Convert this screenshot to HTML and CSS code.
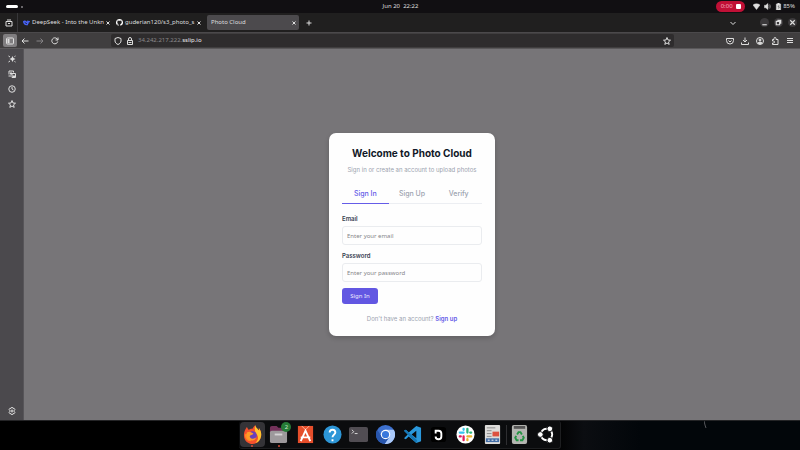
FILE: index.html
```html
<!DOCTYPE html>
<html lang="en">
<head>
<meta charset="utf-8">
<title>Photo Cloud</title>
<link rel="stylesheet" href="styles.css">
</head>
<body>
<header class="system">
  <div class="workspaces"><span class="pill"></span><span class="dot"></span></div>
  <time class="clock">Jun 20&nbsp; 22:22</time>
  <div class="status">
    <button class="record">0:00 <span class="stop"></span></button>
    <svg class="icon" viewBox="0 0 16 16"><path fill="currentColor" d="M0 4.500C4.500 1 11.500 1 16 4.500L8 15z"/></svg>
    <svg class="icon" viewBox="0 0 16 16"><path fill="currentColor" d="M1 5h3l5-4v14l-5-4H1z"/><path d="M11 5q2 3 0 6M13 3q4 5 0 10"/></svg>
    <span class="battery"><svg class="icon" viewBox="0 0 16 16"><path fill="currentColor" d="M6 0h4v2h3v14H3V2h3z"/><path stroke="#222" d="M9 5l-2 4h3l-2 4"/></svg>85%</span>
  </div>
</header>

<nav class="tabstrip" aria-label="Browser tabs">
  <button class="tool view" aria-label="Recent browsing"><svg class="icon" viewBox="0 0 16 16"><path d="M2 5h12v9H2zM4 2h8M6 8l2 2 2-2"/></svg></button>
  <div class="tab">
    <svg class="icon favicon" viewBox="0 0 16 16"><path fill="#4863f5" stroke="none" d="M0 5c4-3 7 0 9 1 1-1 1-2 1-3 2 1 3 2 6 1 0 3-1 4-3 4 0 3-1 4-2 5l1 1H8c-5 0-8-4-8-9z"/><path stroke="#171a35" d="M4 8c2 0 3 3 5 3"/></svg>
    <span class="tab-title">DeepSeek - Into the Unkn</span><button class="close" aria-label="Close tab"><svg viewBox="0 0 8 8"><path d="M1 1l6 6M7 1L1 7"/></svg></button>
  </div>
  <div class="tab">
    <svg class="icon favicon" viewBox="0 0 16 16"><path fill="#fff" stroke="none" d="M8 0a8 8 0 0 0-2.500 15.600c.4.100.5-.2.500-.4v-1.500c-2.200.5-2.700-1-2.700-1-.4-.9-.9-1.200-.9-1.200-.7-.5.100-.5.100-.5.800.1 1.200.8 1.200.8.700 1.200 1.900.9 2.300.7.100-.5.300-.9.500-1.100-1.800-.2-3.600-.9-3.600-4 0-.9.300-1.600.8-2.100-.1-.2-.4-1 .1-2.100 0 0 .7-.2 2.200.8a7.500 7.500 0 0 1 4 0c1.500-1 2.200-.8 2.200-.8.400 1.100.2 1.900.1 2.100.5.600.8 1.300.8 2.100 0 3.100-1.900 3.800-3.700 4 .3.300.6.800.6 1.500v2.300c0 .2.100.5.500.4A8 8 0 0 0 8 0z"/></svg>
    <span class="tab-title">guderian120/s3_photo_s</span><button class="close" aria-label="Close tab"><svg viewBox="0 0 8 8"><path d="M1 1l6 6M7 1L1 7"/></svg></button>
  </div>
  <div class="tab active">
    <span class="tab-title">Photo Cloud</span><button class="close" aria-label="Close tab"><svg viewBox="0 0 8 8"><path d="M1 1l6 6M7 1L1 7"/></svg></button>
  </div>
  <button class="tool new" aria-label="New tab"><svg class="icon" viewBox="0 0 16 16"><path d="M8 3v10M3 8h10"/></svg></button>
  <div class="window">
    <button class="tool list" aria-label="List tabs"><svg class="icon" viewBox="0 0 16 16"><path d="M3 6l5 5 5-5"/></svg></button>
    <button class="round" aria-label="Minimize"><svg viewBox="0 0 8 8"><path d="M2 6h4"/></svg></button>
    <button class="round" aria-label="Restore"><svg viewBox="0 0 8 8"><path d="M2 3h3v3H2zM3 2h3v3"/></svg></button>
    <button class="round" aria-label="Close"><svg viewBox="0 0 8 8"><path d="M2 2l4 4M6 2L2 6"/></svg></button>
  </div>
</nav>

<div class="toolbar">
  <div class="navigation">
    <button class="tool pressed" aria-label="Sidebar"><svg class="icon" viewBox="0 0 16 16"><rect x="1" y="2" width="14" height="12" rx="2"/><path fill="currentColor" stroke="none" d="M3 4h4v8H3z"/></svg></button>
    <button class="tool" aria-label="Back"><svg class="icon" viewBox="0 0 16 16"><path d="M15 8H2M7 3L2 8l5 5"/></svg></button>
    <button class="tool" aria-label="Forward" disabled><svg class="icon" viewBox="0 0 16 16"><path d="M1 8h13M9 3l5 5-5 5"/></svg></button>
    <button class="tool" aria-label="Reload"><svg class="icon" viewBox="0 0 16 16"><path d="M13.500 9A6 6 0 1 1 12 3.500L14 6M14 1v5H9"/></svg></button>
  </div>
  <div class="address">
    <svg class="icon" viewBox="0 0 16 16"><path d="M8 1l6 2v5c0 3-3 6-6 7-3-1-6-4-6-7V3z"/></svg>
    <svg class="icon" viewBox="0 0 16 16"><path d="M3 7h10v8H3zM5 7V4a3 3 0 0 1 6 0v3M5 11h6"/></svg>
    <span class="url">34.242.217.222.<b>sslip.io</b></span>
    <button class="tool" aria-label="Bookmark"><svg class="icon" viewBox="0 0 16 16"><path d="M8 1l2 5 5 .4-4 3.400 1.400 5L8 12l-4.400 2.800 1.400-5-4-3.400L6 6z"/></svg></button>
  </div>
  <div class="actions">
    <button class="tool" aria-label="Pocket"><svg class="icon" viewBox="0 0 16 16"><path d="M1 3h14v4a7 7 0 0 1-14 0zM5 7l3 3 3-3"/></svg></button>
    <button class="tool" aria-label="Downloads"><svg class="icon" viewBox="0 0 16 16"><path d="M8 1v9M4 6l4 4 4-4M1 11v4h14v-4"/></svg></button>
    <button class="tool" aria-label="Account"><svg class="icon" viewBox="0 0 16 16"><circle cx="8" cy="8" r="7"/><circle cx="8" cy="6" r="2" fill="currentColor"/><path fill="currentColor" d="M4 12q4-4 8 0-4 3-8 0z"/></svg></button>
    <button class="tool" aria-label="Extensions"><svg class="icon" viewBox="0 0 16 16"><path d="M3 5h3V3a2 2 0 0 1 4 0v2h4v10H3v-3h2a2 2 0 0 0 0-4H3z"/></svg></button>
    <button class="tool" aria-label="Menu"><svg class="icon" viewBox="0 0 16 16"><path d="M2 3h12M2 7h12M2 11h12"/></svg></button>
  </div>
</div>

<div class="workspace">
  <aside class="sidebar">
    <button class="tool" aria-label="Assistant"><svg class="icon" viewBox="0 0 16 16"><path fill="currentColor" stroke="none" d="M9 2l2 4 4 2-4 2-2 4-2-4-4-2 4-2z"/><path d="M1 2l3 2M1 14l3-2M13 3l2-1M13 13l2 1"/></svg></button>
    <button class="tool" aria-label="Synced tabs"><svg class="icon" viewBox="0 0 16 16"><path d="M2 9V2h9v3M1 12h5M8 7h7v8H8z"/><path fill="currentColor" stroke="none" d="M4 5h4v4H4zM9 11h5v4H9z"/></svg></button>
    <button class="tool" aria-label="History"><svg class="icon" viewBox="0 0 16 16"><circle cx="8" cy="8" r="6.500"/><path d="M8 4v4l3 2"/></svg></button>
    <button class="tool" aria-label="Bookmarks"><svg class="icon" viewBox="0 0 16 16"><path d="M8 1l2 5 5 .4-4 3.400 1.400 5L8 12l-4.400 2.800 1.400-5-4-3.400L6 6z"/></svg></button>
    <button class="tool settings" aria-label="Settings"><svg class="icon" viewBox="0 0 16 16"><path d="M6.500 1h3l.7 2 2-.4 1.600 2.600L12.500 7v2l1.300 1.800-1.600 2.600-2-.4-.7 2h-3l-.7-2-2 .4-1.600-2.600L3.500 9V7L2.200 5.200l1.600-2.600 2 .4z"/><circle cx="8" cy="8" r="2"/></svg></button>
  </aside>
  <main class="page">
    <section class="card">
      <h1>Welcome to Photo Cloud</h1>
      <p class="lead">Sign in or create an account to upload photos</p>
      <div class="auth-tabs" role="tablist">
        <button role="tab" aria-selected="true">Sign In</button>
        <button role="tab" aria-selected="false">Sign Up</button>
        <button role="tab" aria-selected="false">Verify</button>
      </div>
      <form>
        <div class="field"><label for="email">Email</label><input id="email" type="email" placeholder="Enter your email"></div>
        <div class="field"><label for="password">Password</label><input id="password" type="password" placeholder="Enter your password"></div>
        <button class="submit" type="button">Sign In</button>
      </form>
      <p class="switch">Don't have an account? <a href="#signup">Sign up</a></p>
    </section>
  </main>
</div>

<footer class="desktop">
  <svg class="streak" viewBox="0 0 4 8"><path d="M0 0l1 4 1 3"/></svg>
  <nav class="dock" aria-label="Dock">
    <button class="app current running" aria-label="Firefox"><svg viewBox="0 0 20 20"><path fill="#f5502d" d="M1 11C1 6 3 4 4 2c1 1 1 2 2 3 2-1 3-1 4-1 1-2 2-3 3-4 0 3 3 4 4 6 0-1 0-2-.5-3C19 6 19.500 9 19 12c-1 5-5 8-9 8s-9-3-9-9z"/><path fill="#ffc52e" d="M13 0c0 3 3 4 4 6 0-1 0-2-.5-3C19 6 19.500 9 19 12c-1 4-3 6-6 7 3-3 4-6 1-10-2-3-2-6-1-9z"/><path fill="#ff8a24" d="M2 10c2-2 4-1 5 0l3 2-2 5c-4 0-6-3-6-7z"/><circle cx="10" cy="11" r="4.500" fill="#6940ba"/><path fill="#ff9b27" d="M4 8c3-2 5 0 7 1-1 2-3 1-4 3 1 3 5 3 7 1-1 4-8 5-10 0z"/></svg></button>
    <button class="app running" aria-label="Files"><svg viewBox="0 0 20 20"><path fill="#74325b" d="M1 3q0-2 2-2h5l2 2h7q2 0 2 2v6H1z"/><rect x="1" y="6" width="18" height="13" rx="2" fill="#9d999c"/><path fill="#d5d2d4" d="M6 9h8v2H6z"/></svg><span class="badge">2</span></button>
    <button class="app" aria-label="App Center"><svg viewBox="0 0 20 20"><path fill="#e64e2b" d="M2 1h16v18H2z"/><path stroke="#ffb69e" d="M6 1l4 4 4-4"/><path stroke="#fff" stroke-width="2" d="M5 17l5-11 5 11M5 13h10"/></svg></button>
    <button class="app" aria-label="Help"><svg viewBox="0 0 20 20"><circle cx="10" cy="10" r="9.500" fill="#2d96d7"/><path stroke="#fff" stroke-width="2" d="M7 8c0-4 6-4 6 0 0 2-3 2-3 5M10 15v2"/></svg></button>
    <button class="app" aria-label="Terminal"><svg viewBox="0 0 20 20"><rect x="0" y="2" width="20" height="16" rx="2" fill="#514d53"/><path stroke="#ddd" d="M3 5l2 2-2 2M6 9h3"/></svg></button>
    <button class="app" aria-label="Chromium"><svg viewBox="0 0 20 20"><circle cx="10" cy="10" r="10" fill="#3d70ce"/><path fill="#aac9fa" d="M10 5h8.700A10 10 0 0 1 9 20l5-8z"/><path fill="#2856ad" d="M1.300 5A10 10 0 0 0 9 20l5-7-8-1z"/><circle cx="10" cy="10" r="5" fill="#fff"/><circle cx="10" cy="10" r="3.800" fill="#3978dc"/></svg></button>
    <button class="app" aria-label="Visual Studio Code"><svg viewBox="0 0 20 20"><path fill="#2a98dc" fill-rule="evenodd" d="M14 1l5 2v14l-5 2-8-7-3 3-2-1 4-4-4-4 2-1 3 3zM14 6l-5 4 5 4z"/><path fill="#1677b5" d="M1 6l2-1 12 11-1 3z"/></svg></button>
    <button class="app" aria-label="Notes"><svg viewBox="0 0 20 20"><rect x="2" y="2" width="16" height="16" rx="3" fill="#000"/><path stroke="#fff" stroke-width="2" d="M7 9V6h3c2 0 3 1 3 3v3c0 2-1 3-3 3s-3-1-3-3"/></svg></button>
    <button class="app" aria-label="Slack"><svg viewBox="0 0 20 20"><circle cx="10" cy="10" r="9.500" fill="#fff"/><g stroke-width="2.400" stroke-linecap="round"><path stroke="#36c5f0" d="M4 8h4M8 4v1"/><path stroke="#2eb67d" d="M12 4v4M15 8h1"/><path stroke="#ecb22e" d="M12 12h4M12 15v1"/><path stroke="#e01e5a" d="M8 12v4M4 12h1"/></g></svg></button>
    <button class="app" aria-label="Documents"><svg viewBox="0 0 20 20"><rect x="2" y="0" width="16" height="20" rx="1" fill="#dddcda"/><path stroke="#8a8a8a" d="M4 3h9M4 6h5M4 9h5M4 12h5"/><path fill="#dd5140" d="M10 7h7v5h-7z"/><path fill="#426da6" d="M3 14h14v4H3z"/><path stroke="#fff" d="M5 16h2M9 16h2M13 16h2"/></svg></button>
    <span class="separator"></span>
    <button class="app" aria-label="Trash"><svg viewBox="0 0 20 20"><rect x="2" y="0" width="16" height="20" rx="2" fill="#b4b5b1"/><path fill="#555" d="M4 1h12v3H4z"/><path stroke="#239443" stroke-width="2" d="M7.500 10l1.500-2.500h2l1.500 2.500M13.500 11.500l1 2-1.500 2.500h-2.500M9 16H7l-1.500-2.500 1-2"/></svg></button>
    <button class="app" aria-label="Show applications"><svg viewBox="0 0 20 20"><circle cx="10" cy="10" r="6" stroke="#fff" stroke-width="2"/><g fill="#fff" stroke="#0c0d0f"><circle cx="3.500" cy="10" r="3"/><circle cx="13.500" cy="4" r="3"/><circle cx="13.500" cy="16" r="3"/></g></svg></button>
  </nav>
</footer>
</body>
</html>
```

FILE: styles.css
```css
* { box-sizing: border-box; }
body {
  margin: 0;
  min-height: 100vh;
  display: flex;
  flex-direction: column;
  font: 6px/9px "Noto Sans", sans-serif;
  color: #dedede;
  background: #000;
}
button {
  margin: 0;
  padding: 0;
  border: 0;
  background: none;
  color: inherit;
  font: inherit;
}
svg { display: block; fill: none; }
.icon {
  flex: none;
  width: 8px;
  height: 8px;
  stroke: currentColor;
  stroke-width: 2;
}

/* System bar */
.system {
  display: grid;
  grid-template-columns: 1fr auto 1fr;
  align-items: center;
  height: 13px;
  padding: 0 5px 0 6px;
  background: #110f12;
}
.workspaces { display: flex; align-items: center; gap: 3px; }
.pill { width: 12px; height: 3px; border-radius: 2px; background: #fff; }
.dot { width: 2px; height: 2px; border-radius: 50%; background: #88868a; }
.status { display: flex; justify-content: flex-end; align-items: center; gap: 4px; }
.status .icon { width: 7px; height: 7px; stroke-width: 1; }
.record {
  display: flex;
  align-items: center;
  justify-content: center;
  gap: 3px;
  width: 29px;
  height: 11px;
  margin-right: 4px;
  border-radius: 6px;
  background: #c01036;
  color: #f5a9bd;
}
.stop { width: 5px; height: 5px; border-radius: 1px; background: #fff; }
.battery { display: flex; align-items: center; gap: 1px; }

/* Browser tabs */
.tabstrip {
  display: flex;
  align-items: center;
  height: 19px;
  padding-right: 3px;
  background: #201f1f;
}
.tool { display: grid; place-items: center; width: 15px; height: 15px; }
.view { width: 18px; height: 19px; border-right: 1px solid #38373a; }
.tab {
  display: flex;
  align-items: center;
  gap: 2px;
  width: 92px;
  height: 15px;
  margin-left: 1px;
  padding: 0 3px 0 4px;
  border-radius: 2px;
}
.tab.active { margin-left: 3px; background: #4c4a4d; }
.tab-title { flex: 1; white-space: nowrap; }
.favicon { width: 7px; height: 7px; }
.close svg { width: 4px; height: 4px; stroke: currentColor; stroke-width: 2; }
.new { margin-left: 2px; }
.window { display: flex; align-items: center; gap: 5px; margin-left: auto; }
.list { margin-right: 15px; }
.round { border-radius: 50%; background: #3b393b; }
.round svg { width: 9px; height: 9px; stroke: currentColor; stroke-width: 1; }

/* Address row */
.toolbar {
  display: grid;
  grid-template-columns: 111px 1fr 126px;
  align-items: center;
  height: 17px;
  border-top: 1px solid #4b494b;
  border-bottom: 1px solid #5a585a;
  background: #403e3f;
}
.navigation { display: flex; padding-left: 3px; }
.navigation .tool { height: 13px; }
.navigation .pressed { width: 14px; border-radius: 2px; background: #807e80; }
.tool:disabled { color: #858386; }
.address {
  display: flex;
  align-items: center;
  gap: 4px;
  height: 13px;
  padding-left: 3px;
  border-radius: 2px;
  background: #2e2c2d;
}
.url { flex: 1; color: #8a888a; }
.url b { font-weight: 400; color: #efefef; }
.address .tool { height: 13px; }
.actions { display: flex; justify-content: flex-end; padding-right: 3px; }

/* Sidebar and page */
.workspace { flex: 1; display: flex; }
.sidebar {
  display: flex;
  flex-direction: column;
  align-items: center;
  width: 24px;
  padding: 2px 0;
  border-right: 1px solid #575559;
  background: #4b494d;
}
.settings { margin-top: auto; }
.page { flex: 1; display: grid; place-items: center; background: #777578; }
.card {
  width: 166px;
  padding: 13px;
  border-radius: 7px;
  background: #fefefe;
  box-shadow: 0 2px 5px #00000030;
  color: #9ca3af;
  font-family: Inter, sans-serif;
  text-align: center;
}
h1 { margin: 0 0 4px; font-size: 10px; line-height: 15px; font-weight: 700; color: #111827; white-space: nowrap; }
p { margin: 0; white-space: nowrap; }
.auth-tabs { display: flex; margin: 10px 0; border-bottom: 1px solid #eceef2; }
.auth-tabs button {
  flex: 1;
  height: 20px;
  margin-bottom: -1px;
  border-bottom: 1px solid transparent;
  font-size: 7px;
  font-weight: 500;
}
.auth-tabs [aria-selected="true"] { border-color: #655ce8; color: #655ce8; }
form { display: grid; gap: 6px; justify-items: start; text-align: left; }
.field { display: grid; gap: 3px; width: 100%; }
label { font-weight: 600; color: #374151; }
input {
  width: 100%;
  height: 19px;
  padding: 0 4px;
  border: 1px solid #eaecef;
  border-radius: 3px;
  background: #fefefe;
  color: #374151;
  font: 6px "Noto Sans", sans-serif;
}
input::placeholder { color: #858589; }
.submit {
  width: 36px;
  height: 16px;
  border-radius: 3px;
  background: #6257e2;
  color: #eeecff;
  font-family: "Noto Sans", sans-serif;
}
.switch { margin-top: 10px; }
.switch a { color: #655ce8; font-weight: 600; text-decoration: none; }

/* Dock */
.desktop {
  position: relative;
  display: flex;
  justify-content: center;
  height: 30px;
  background: linear-gradient(to right, #000 69%, #0b0d11 73%, #02060a 80%, #02060a);
  border-top: 1px solid #242426;
}
.streak { position: absolute; left: 88%; top: 0; width: 4px; height: 8px; stroke: #55565a; }
.dock {
  display: grid;
  grid-template-columns: repeat(10, 1fr) 1px repeat(2, 1fr);
  align-items: center;
  justify-items: center;
  width: 322px;
  height: 28px;
  border: solid #1d1e20;
  border-width: 0 1px 1px 0;
  border-radius: 3px;
  background: #0b0c0e;
}
.app { position: relative; display: grid; place-items: center; width: 25px; height: 25px; border-radius: 4px; }
.app svg { width: 19px; height: 19px; }
.current { background: #343337; }
.running::after {
  content: "";
  position: absolute;
  bottom: 0;
  width: 2px;
  height: 2px;
  border-radius: 50%;
  background: #d84b34;
}
.badge {
  position: absolute;
  top: 0;
  right: 0;
  width: 10px;
  height: 10px;
  border-radius: 50%;
  background: #267b36;
  color: #c5e4c9;
  line-height: 10px;
}
.separator { width: 1px; height: 20px; background: #2e2e31; }
```
